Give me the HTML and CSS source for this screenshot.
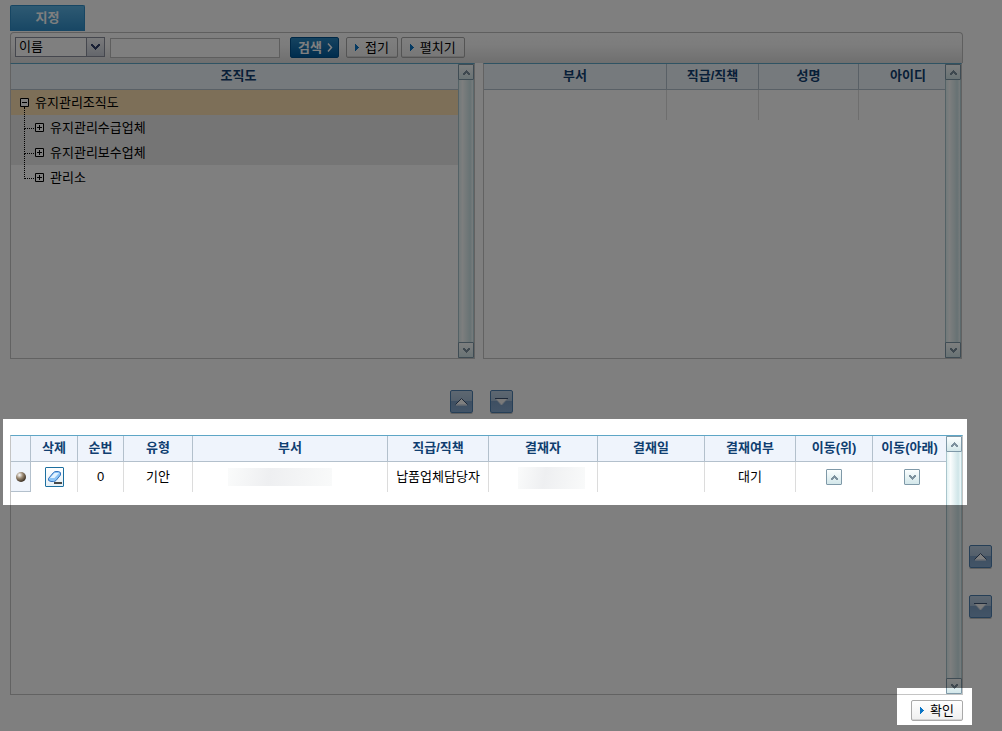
FILE: index.html
```html
<!DOCTYPE html>
<html lang="ko">
    <head>
        <meta charset="UTF-8">
        <meta name="viewport" content="width=device-width, initial-scale=1.0">
        <title>결재선 지정</title>
        <link rel="stylesheet" href="styles.css">
    </head>

    <body>
        <svg class="symbols" aria-hidden="true">
            <symbol id="chevron-up" viewBox="0 0 7 5">
                <path d="M3 0h1v1h1v1h1v1h1v2H5V4H4V3H3v1H2v1H0V3h1V2h1V1h1z"/>
            </symbol>
            <symbol id="chevron-down" viewBox="0 0 7 5">
                <path d="M0 0h2v1h1v1h1V1h1V0h2v2H6v1H5v1H4v1H3V4H2V3H1V2H0z"/>
            </symbol>
            <symbol id="play" viewBox="0 0 4 7">
                <path d="M0 0h1v1h1v1h1v1h1v1H3v1H2v1H1v1H0z"/>
            </symbol>
            <symbol id="move-up" viewBox="0 0 13 9">
                <path d="M6.500 1.500L12.500 7.500H0.500z" fill="#fff"/>
                <path d="M0.500 7.500L6.500 1.500l6 6" fill="none" stroke="#3a5070"/>
                <path d="M1 8h11" stroke="#f0f0f0"/>
            </symbol>
            <symbol id="move-down" viewBox="0 0 13 9">
                <path d="M0.500 1.500h12L6.500 8z" fill="#f4f4f4" stroke="#d4dce6"/>
                <path d="M0 1.500h13" stroke="#3a5070"/>
            </symbol>
        </svg>

        <ul class="tabs">
            <li><a href="#" class="tab">지정</a></li>
        </ul>

        <main class="content">
            <form class="search-bar">
                <span class="select-box">
                    <select aria-label="검색 조건">
                        <option>이름</option>
                        <option>부서</option>
                    </select>
                    <span class="select-arrow"><svg width="9" height="7"><path d="M0 0h2v1h1v1h1v1h1V2h1V1h1V0h2v2H8v1H7v1H6v1H5v1H4V5H3V4H2V3H1V2H0z"/></svg></span>
                </span>
                <input type="text" class="keyword" aria-label="검색어">
                <button type="button" class="btn btn-search">검색 <svg width="6" height="9"><path d="M1 0.500l3.500 4L1 8.500" fill="none" stroke="#fff" stroke-width="1.500"/></svg></button>
                <div class="btn-group">
                    <button type="button" class="btn"><svg class="play" width="4" height="7"><use href="#play"/></svg>접기</button>
                    <button type="button" class="btn"><svg class="play" width="4" height="7"><use href="#play"/></svg>펼치기</button>
                </div>
            </form>

            <div class="panels">
                <section class="panel panel-top">
                    <div class="panel-body">
                        <h2 class="panel-title">조직도</h2>
                        <ul class="tree">
                            <li>
                                <div class="node selected"><button class="toggle" aria-label="닫기"><svg width="9" height="9"><path d="M0.500 0.500h8v8h-8zM2 4.500h5"/></svg></button>유지관리조직도</div>
                                <ul>
                                    <li><div class="node shaded"><button class="toggle" aria-label="열기"><svg width="9" height="9"><path d="M0.500 0.500h8v8h-8zM2 4.500h5M4.500 2v5"/></svg></button>유지관리수급업체</div></li>
                                    <li><div class="node shaded"><button class="toggle" aria-label="열기"><svg width="9" height="9"><path d="M0.500 0.500h8v8h-8zM2 4.500h5M4.500 2v5"/></svg></button>유지관리보수업체</div></li>
                                    <li><div class="node"><button class="toggle" aria-label="열기"><svg width="9" height="9"><path d="M0.500 0.500h8v8h-8zM2 4.500h5M4.500 2v5"/></svg></button>관리소</div></li>
                                </ul>
                            </li>
                        </ul>
                    </div>
                    <div class="scroll">
                        <button class="arrow" aria-label="위로"><svg width="7" height="5"><use href="#chevron-up"/></svg></button>
                        <button class="arrow" aria-label="아래로"><svg width="7" height="5"><use href="#chevron-down"/></svg></button>
                    </div>
                </section>

                <section class="panel panel-top">
                    <div class="panel-body">
                        <table class="grid">
                            <colgroup>
                                <col>
                                <col class="w92">
                                <col class="w100">
                                <col class="w86">
                            </colgroup>
                            <thead>
                                <tr><th>부서</th><th>직급/직책</th><th>성명</th><th class="last-id">아이디</th></tr>
                            </thead>
                            <tbody>
                                <tr><td></td><td></td><td></td><td></td></tr>
                            </tbody>
                        </table>
                    </div>
                    <div class="scroll">
                        <button class="arrow" aria-label="위로"><svg width="7" height="5"><use href="#chevron-up"/></svg></button>
                        <button class="arrow" aria-label="아래로"><svg width="7" height="5"><use href="#chevron-down"/></svg></button>
                    </div>
                </section>
            </div>

            <div class="transfer">
                <button class="move" aria-label="제외"><svg width="13" height="9"><use href="#move-up"/></svg></button>
                <button class="move" aria-label="추가"><svg width="13" height="9"><use href="#move-down"/></svg></button>
            </div>

            <section class="panel panel-line">
                <div class="panel-body">
                    <table class="grid">
                        <colgroup>
                            <col class="w20">
                            <col class="w47">
                            <col class="w46">
                            <col class="w69">
                            <col>
                            <col class="w101">
                            <col class="w109">
                            <col class="w107">
                            <col class="w91">
                            <col class="w77">
                            <col class="w73">
                        </colgroup>
                        <thead>
                            <tr>
                                <th></th>
                                <th>삭제</th>
                                <th>순번</th>
                                <th>유형</th>
                                <th>부서</th>
                                <th>직급/직책</th>
                                <th>결재자</th>
                                <th>결재일</th>
                                <th>결재여부</th>
                                <th>이동(위)</th>
                                <th>이동(아래)</th>
                            </tr>
                        </thead>
                        <tbody>
                            <tr>
                                <td class="marker"><span class="ball"></span></td>
                                <td>
                                    <button class="erase" aria-label="삭제">
                                        <svg width="17" height="18">
                                            <path d="M8 15h8" stroke="#111" stroke-width="1.500"/>
                                            <path d="M2.500 10.500L7.500 4.500Q8.500 3.500 10 3.500h2.500Q15.500 4 14.500 7L10 12.500Q9 13.500 7.500 13.500H5Q1.500 13 2.500 10.500z" fill="#8cc4f6" stroke="#3573bd"/>
                                            <path d="M4 10l4.500-5h4.500L8.500 10z" fill="#e3f3ff"/>
                                        </svg>
                                    </button>
                                </td>
                                <td>0</td>
                                <td>기안</td>
                                <td class="dept"><span class="masked masked-dept"></span></td>
                                <td>납품업체담당자</td>
                                <td class="name"><span class="masked masked-name"></span></td>
                                <td></td>
                                <td>대기</td>
                                <td><button class="arrow" aria-label="위로 이동"><svg width="7" height="5"><use href="#chevron-up"/></svg></button></td>
                                <td class="down"><button class="arrow" aria-label="아래로 이동"><svg width="7" height="5"><use href="#chevron-down"/></svg></button></td>
                            </tr>
                        </tbody>
                    </table>
                </div>
                <div class="scroll">
                    <button class="arrow" aria-label="위로"><svg width="7" height="5"><use href="#chevron-up"/></svg></button>
                    <button class="arrow" aria-label="아래로"><svg width="7" height="5"><use href="#chevron-down"/></svg></button>
                </div>
            </section>

            <div class="order">
                <button class="move" aria-label="위로"><svg width="13" height="9"><use href="#move-up"/></svg></button>
                <button class="move" aria-label="아래로"><svg width="13" height="9"><use href="#move-down"/></svg></button>
            </div>

            <div class="actions">
                <button class="btn"><svg class="play" width="4" height="7"><use href="#play"/></svg>확인</button>
            </div>
        </main>

        <!-- dimmed layer, open over the approval line and the confirm button -->
        <svg class="dim" aria-hidden="true">
            <mask id="spots">
                <rect width="100%" height="100%" fill="#fff"/>
                <rect x="3" y="419" width="964" height="86" fill="#000"/>
                <rect x="897" y="688" width="75" height="37" fill="#000"/>
            </mask>
            <rect width="100%" height="100%" mask="url(#spots)"/>
        </svg>
    </body>
</html>
```

FILE: styles.css
```css
* {
    box-sizing: border-box;
}

body {
    margin: 0;
    padding: 5px 10px;
    background: #fff;
    color: #000;
    font-family: "Liberation Sans", "Noto Sans CJK KR", sans-serif;
    font-size: 13px;
    line-height: 16px;
}

ul {
    list-style: none;
    margin: 0;
    padding: 0;
}

button, input, select {
    margin: 0;
    padding: 0;
    font: inherit;
    color: inherit;
}

svg {
    display: block;
}

.symbols {
    position: absolute;
    width: 0;
    height: 0;
}

/* tab */
.tabs {
    display: flex;
    margin-bottom: 1px;
}

.tab {
    display: block;
    width: 75px;
    height: 26px;
    border: 1px solid #2e8cc6;
    border-bottom: 0;
    border-radius: 2px 2px 0 0;
    background: linear-gradient(#5db4e6, #2f8dc8);
    color: #fff;
    font-weight: bold;
    line-height: 24px;
    text-align: center;
    text-decoration: none;
}

.content {
    display: grid;
    grid-template-columns: minmax(0, 1fr) 23px;
    column-gap: 6px;
}

.search-bar, .panels, .transfer, .panel-line, .actions {
    grid-column: 1;
}

/* search */
.search-bar {
    display: flex;
    align-items: flex-start;
    height: 31px;
    padding: 4px;
    border: 1px solid #bfbfbf;
    border-bottom: 0;
    border-radius: 4px 4px 0 0;
    background: linear-gradient(#fff, #fafafa 40%, #dedede);
}

.select-box {
    position: relative;
    width: 90px;
    height: 20px;
    margin-right: 5px;
}

.select-box select {
    width: 100%;
    height: 100%;
    padding: 0 20px 0 3px;
    border: 1px solid #8a8f9c;
    border-radius: 0;
    background: #fff;
    appearance: none;
}

.select-arrow {
    position: absolute;
    top: 1px;
    right: 1px;
    display: flex;
    align-items: center;
    justify-content: center;
    width: 18px;
    height: 18px;
    border-left: 1px solid #8a8f9c;
    background: linear-gradient(#f4f5f8, #c9ced8);
    fill: #33416b;
    pointer-events: none;
}

.keyword {
    width: 170px;
    height: 20px;
    margin: 1px 10px 0 0;
    border: 1px solid #bdbdbd;
    background: #fff;
}

.btn {
    display: flex;
    align-items: center;
    gap: 6px;
    height: 21px;
    padding: 0 8px;
    border: 1px solid #a9a9a9;
    border-radius: 2px;
    background: linear-gradient(#fff, #efefef);
    box-shadow: inset 0 -1px 0 #d4d4d4;
    line-height: 18px;
    white-space: nowrap;
}

.btn-search {
    gap: 5px;
    margin-right: 7px;
    padding: 0 5px 0 7px;
    border-color: #00508c;
    background: linear-gradient(#2a86c0, #005a9c);
    box-shadow: none;
    color: #fff;
    font-weight: bold;
}

.btn-group {
    display: flex;
    gap: 3px;
}

.play {
    fill: #0a74c4;
}

/* panels */
.panels {
    display: grid;
    grid-template-columns: 465fr 479fr;
    gap: 8px;
    padding-right: 1px;
}

.panel {
    display: flex;
    border: 1px solid #c4c4c4;
    border-top-color: #5ea6c6;
}

.panel-top {
    min-height: 296px;
}

.panel-line {
    min-height: 260px;
}

.panel-body {
    flex: 1;
    min-width: 0;
}

.panel-title {
    height: 26px;
    margin: 0;
    padding-left: 8px;
    border-bottom: 1px solid #b3c0cc;
    background: #edf4fa;
    color: #103e70;
    font-size: 13px;
    line-height: 24px;
    text-align: center;
}

.scroll {
    display: flex;
    flex-direction: column;
    justify-content: space-between;
    width: 16px;
    border-left: 1px solid #a9c5cc;
    border-right: 1px solid #b9d3d8;
    background: linear-gradient(90deg, #e3f3f4, #fafdfd 25%, #cfe5e8 80%, #eef8f9);
}

.arrow {
    display: flex;
    align-items: center;
    justify-content: center;
    width: 16px;
    height: 16px;
    border: 1px solid #7f99a8;
    border-radius: 1px;
    background: linear-gradient(#fbfefe, #d3e7ea);
    fill: #7d919e;
}

.scroll .arrow {
    margin-left: -1px;
}

/* tree */
.node {
    display: flex;
    align-items: center;
    gap: 6px;
    height: 25px;
    padding-left: 9px;
}

.selected {
    background: #fbdfb0;
}

.shaded {
    background: #ebebeb;
}

.toggle {
    position: relative;
    width: 9px;
    height: 9px;
    border: 0;
    background: #fff;
}

.toggle path {
    fill: none;
    stroke: #000;
}

.tree ul .node {
    position: relative;
    padding-left: 24px;
}

.tree ul .node::before {
    content: "";
    position: absolute;
    left: 13px;
    top: -12px;
    width: 11px;
    height: 25px;
    border-left: 1px dotted #000;
    border-bottom: 1px dotted #000;
}

.tree ul li:first-child .node::before {
    top: -8px;
    height: 21px;
}

/* tables */
.grid {
    width: 100%;
    border-collapse: separate;
    border-spacing: 0;
    table-layout: fixed;
}

.grid th {
    height: 26px;
    padding: 0 0 2px;
    border-right: 1px solid #b3c0cc;
    border-bottom: 1px solid #b3c0cc;
    background: #eff4fc;
    color: #103e70;
    white-space: nowrap;
}

.panel-top .grid th {
    background: #edf4fa;
}

.grid td {
    height: 30px;
    padding: 0;
    border-right: 1px solid #dcdcdc;
    text-align: center;
    white-space: nowrap;
}

.grid th:last-child, .grid td:last-child {
    border-right: 0;
}

.grid .last-id {
    padding-left: 12px;
}

.grid .dept {
    padding-right: 20px;
}

.grid .name {
    padding: 2px 0 0 16px;
}

.grid .down {
    padding-left: 5px;
}

.grid td .arrow, .erase, .ball, .masked {
    display: flex;
    margin: 0 auto;
}

.grid .marker {
    border-right-color: #b3c0cc;
    border-bottom: 1px solid #b3c0cc;
    background: #eff4fc;
}

.w20 { width: 20px; }
.w46 { width: 46px; }
.w47 { width: 47px; }
.w69 { width: 69px; }
.w73 { width: 73px; }
.w77 { width: 77px; }
.w86 { width: 86px; }
.w91 { width: 91px; }
.w92 { width: 92px; }
.w100 { width: 100px; }
.w101 { width: 101px; }
.w107 { width: 107px; }
.w109 { width: 109px; }

.ball {
    width: 10px;
    height: 10px;
    border-radius: 50%;
    background: radial-gradient(circle at 35% 30%, #fff, #9c8a74 35%, #3a2e22 75%, #1c140c);
}

.erase {
    width: 19px;
    height: 20px;
    border: 1px solid #1d6f9f;
    border-radius: 1px;
    background: linear-gradient(#fff, #e6f0f6);
}

.masked {
    background: linear-gradient(100deg, #fafbfb, #eeeff1 40%, #f9fafa);
}

.masked-dept {
    width: 104px;
    height: 18px;
}

.masked-name {
    width: 67px;
    height: 22px;
}

/* move buttons */
.transfer {
    display: flex;
    justify-content: center;
    gap: 17px;
    padding: 31px 0 22px;
    margin-right: 10px;
}

.order {
    display: flex;
    flex-direction: column;
    justify-content: center;
    gap: 27px;
    padding-top: 32px;
}

.move {
    display: flex;
    align-items: center;
    justify-content: center;
    width: 23px;
    height: 23px;
    border: 1px solid #4d7eae;
    border-radius: 2px;
    background: linear-gradient(#bccfe2, #a9c0d8 45%, #7d9fc4 50%, #86a9cf);
    box-shadow: 0 1px 0 #c0c0c0;
}

.actions {
    display: flex;
    justify-content: flex-end;
    margin-top: 5px;
}

.dim {
    position: fixed;
    inset: 0;
    width: 100%;
    height: 100%;
    fill: rgba(0, 0, 0, 0.5);
    pointer-events: none;
}
```
